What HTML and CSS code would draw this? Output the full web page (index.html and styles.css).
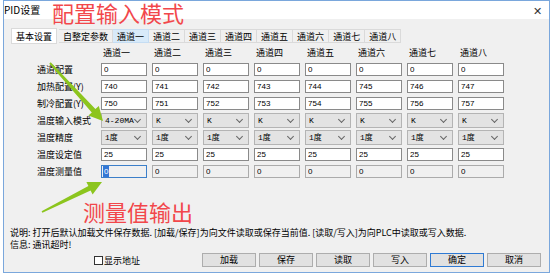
FILE: index.html
```html
<!DOCTYPE html>
<html lang="zh-CN">
<head>
  <meta charset="UTF-8">
  <title>PID设置</title>
  <link rel="stylesheet" href="styles.css">
</head>
<body>
  <div class="window">
    <div class="titlebar">
      <span class="title">PID设置</span>
      <span class="close">&#x2715;</span>
    </div>

    <div class="content">
      <div class="tabs">
        <div class="tab tab-active">基本设置</div>
        <div class="tab">自整定参数</div>
        <div class="tab tab-hover">通道一</div>
        <div class="tab">通道二</div>
        <div class="tab">通道三</div>
        <div class="tab">通道四</div>
        <div class="tab">通道五</div>
        <div class="tab">通道六</div>
        <div class="tab">通道七</div>
        <div class="tab">通道八</div>
      </div>

      <div class="grid">
        <!-- header -->
        <div></div>
        <div class="col-head">通道一</div>
        <div class="col-head">通道二</div>
        <div class="col-head">通道三</div>
        <div class="col-head">通道四</div>
        <div class="col-head">通道五</div>
        <div class="col-head">通道六</div>
        <div class="col-head">通道七</div>
        <div class="col-head">通道八</div>

        <div class="label">通道配置</div>
        <input class="field" value="0"><input class="field" value="0"><input class="field" value="0"><input class="field" value="0">
        <input class="field" value="0"><input class="field" value="0"><input class="field" value="0"><input class="field" value="0">

        <div class="label">加热配置(Y)</div>
        <input class="field" value="740"><input class="field" value="741"><input class="field" value="742"><input class="field" value="743">
        <input class="field" value="744"><input class="field" value="745"><input class="field" value="746"><input class="field" value="747">

        <div class="label">制冷配置(Y)</div>
        <input class="field" value="750"><input class="field" value="751"><input class="field" value="752"><input class="field" value="753">
        <input class="field" value="754"><input class="field" value="755"><input class="field" value="756"><input class="field" value="757">

        <div class="label">温度输入模式</div>
        <div class="combo"><span>4-20MA</span></div>
        <div class="combo"><span>K</span></div>
        <div class="combo"><span>K</span></div>
        <div class="combo"><span>K</span></div>
        <div class="combo"><span>K</span></div>
        <div class="combo"><span>K</span></div>
        <div class="combo"><span>K</span></div>
        <div class="combo"><span>K</span></div>

        <div class="label">温度精度</div>
        <div class="combo"><span>1度</span></div>
        <div class="combo"><span>1度</span></div>
        <div class="combo"><span>1度</span></div>
        <div class="combo"><span>1度</span></div>
        <div class="combo"><span>1度</span></div>
        <div class="combo"><span>1度</span></div>
        <div class="combo"><span>1度</span></div>
        <div class="combo"><span>1度</span></div>

        <div class="label">温度设定值</div>
        <input class="field" value="25"><input class="field" value="25"><input class="field" value="25"><input class="field" value="25">
        <input class="field" value="25"><input class="field" value="25"><input class="field" value="25"><input class="field" value="25">

        <div class="label">温度测量值</div>
        <div class="field field-readonly field-focus"><span class="selected">0</span></div>
        <input class="field field-readonly" value="0" readonly><input class="field field-readonly" value="0" readonly>
        <input class="field field-readonly" value="0" readonly><input class="field field-readonly" value="0" readonly>
        <input class="field field-readonly" value="0" readonly><input class="field field-readonly" value="0" readonly>
        <input class="field field-readonly" value="0" readonly>
      </div>

      <div class="notes">
        <p>说明: 打开后默认加载文件保存数据. [加载/保存]为向文件读取或保存当前值. [读取/写入]为向PLC中读取或写入数据.</p>
        <p>信息: 通讯超时!</p>
      </div>

      <div class="footer">
        <label class="check"><span class="box"></span>显示地址</label>
        <div class="buttons">
          <button class="btn">加载</button>
          <button class="btn">保存</button>
          <button class="btn">读取</button>
          <button class="btn">写入</button>
          <button class="btn btn-default">确定</button>
          <button class="btn">取消</button>
        </div>
      </div>
    </div>
  </div>

  <!-- annotations drawn over the dialog -->
  <div class="note-red note-top">配置输入模式</div>
  <div class="note-red note-bottom">测量值输出</div>
  <svg class="arrows" width="553" height="278" viewBox="0 0 553 278">
    <polygon points="50.7,62.3 95.4,109 98.8,106 103,121 88.4,115.4 91.8,112.4 49.3,63.7" />
    <polygon points="41.6,211.3 88.4,186.1 86.4,182 102,182 92.6,194.6 90.6,190.5 42.4,212.7" />
  </svg>
</body>
</html>
```

FILE: styles.css
```css
/* Base */
* {
  margin: 0;
  padding: 0;
  box-sizing: border-box;
}

body {
  width: 553px;
  height: 278px;
  background: #fff;
  font-family: "Noto Sans CJK SC", "Liberation Sans", sans-serif;
  font-size: 9px;
  color: #000;
  overflow: hidden;
}

/* Window frame */
.window {
  width: 547px;
  height: 273px;
  margin-left: 3px;
  border: 1px solid #7aa7dc;
  background: #f0f0f0;
  display: flex;
  flex-direction: column;
}

.titlebar {
  height: 18px;
  background: #fff;
  display: flex;
  align-items: center;
  justify-content: space-between;
  padding: 0 7px 0 0;
}

.title {
  font-size: 10px;
  line-height: 18px;
}

.close {
  font-size: 11px;
  color: #333;
}

.content {
  flex: 1;
  display: flex;
  flex-direction: column;
}

/* Tabs */
.tabs {
  display: flex;
  align-items: center;
  height: 16px;
  margin-top: 9px;
  padding-left: 7px;
}

.tab {
  height: 14px;
  line-height: 13px;
  padding: 0 4px;
  border: 1px solid #dadada;
  border-left: none;
  background: #f0f0f0;
  white-space: nowrap;
}

.tab-active {
  height: 16px;
  line-height: 15px;
  background: #fff;
  border-left: 1px solid #dadada;
  margin-right: 2px;
}

.tab-hover {
  background: #d8eaf9;
  border-color: #c5ddf3;
}

/* Parameter grid */
.grid {
  display: grid;
  grid-template-columns: 59px repeat(8, 46px);
  grid-auto-rows: 17px;
  column-gap: 5px;
  align-items: center;
  margin-left: 33px;
}

.col-head {
  padding-left: 2px;
  line-height: 17px;
}

.label {
  white-space: nowrap;
}

.field {
  width: 46px;
  height: 13px;
  border: 1px solid #8a8a8a;
  background: #fff;
  font-family: "Liberation Sans", sans-serif;
  font-size: 8px;
  line-height: 11px;
  padding: 0 2px;
  color: #000;
  outline: none;
}

.field-readonly {
  background: #f0f0f0;
  border-color: #ababab;
}

.field-focus {
  border-color: #3c7fc9;
  padding-left: 1px;
}

.selected {
  display: inline-block;
  background: #3377d6;
  color: #fff;
  padding: 0 1px;
}

.combo {
  position: relative;
  width: 46px;
  height: 15px;
  border: 1px solid #b4b4b4;
  background: #e3e3e3;
  font-family: "Liberation Mono", "Noto Sans CJK SC", monospace;
  font-size: 8px;
  line-height: 13px;
  padding-left: 3px;
}

.combo::after {
  content: "";
  position: absolute;
  right: 6px;
  top: 3px;
  width: 4px;
  height: 4px;
  border-right: 1px solid #666;
  border-bottom: 1px solid #666;
  transform: rotate(45deg);
}

/* Notes */
.notes {
  margin-top: 47px;
  padding-left: 6px;
  line-height: 12px;
  white-space: nowrap;
}

/* Footer */
.footer {
  display: flex;
  align-items: center;
  margin-top: 2px;
  padding-left: 90px;
  padding-right: 8px;
}

.check {
  display: flex;
  align-items: center;
  gap: 1px;
}

.box {
  width: 9px;
  height: 9px;
  border: 1px solid #333;
  background: #fff;
}

.buttons {
  display: flex;
  gap: 3px;
  margin-left: auto;
}

.btn {
  width: 54px;
  height: 14px;
  border: 1px solid #adadad;
  background: #e1e1e1;
  font-family: inherit;
  font-size: 9px;
  line-height: 12px;
  color: #000;
}

.btn-default {
  border: 1px solid #2f7ad3;
}

/* Annotation overlay */
.note-red {
  position: absolute;
  font-size: 22px;
  line-height: 24px;
  color: #f2474b;
  white-space: nowrap;
}

.note-top {
  left: 52px;
  top: 0;
}

.note-bottom {
  left: 83px;
  top: 199px;
}

.arrows {
  position: absolute;
  left: 0;
  top: 0;
  pointer-events: none;
}

.arrows polygon {
  fill: #8cc51e;
}
```
